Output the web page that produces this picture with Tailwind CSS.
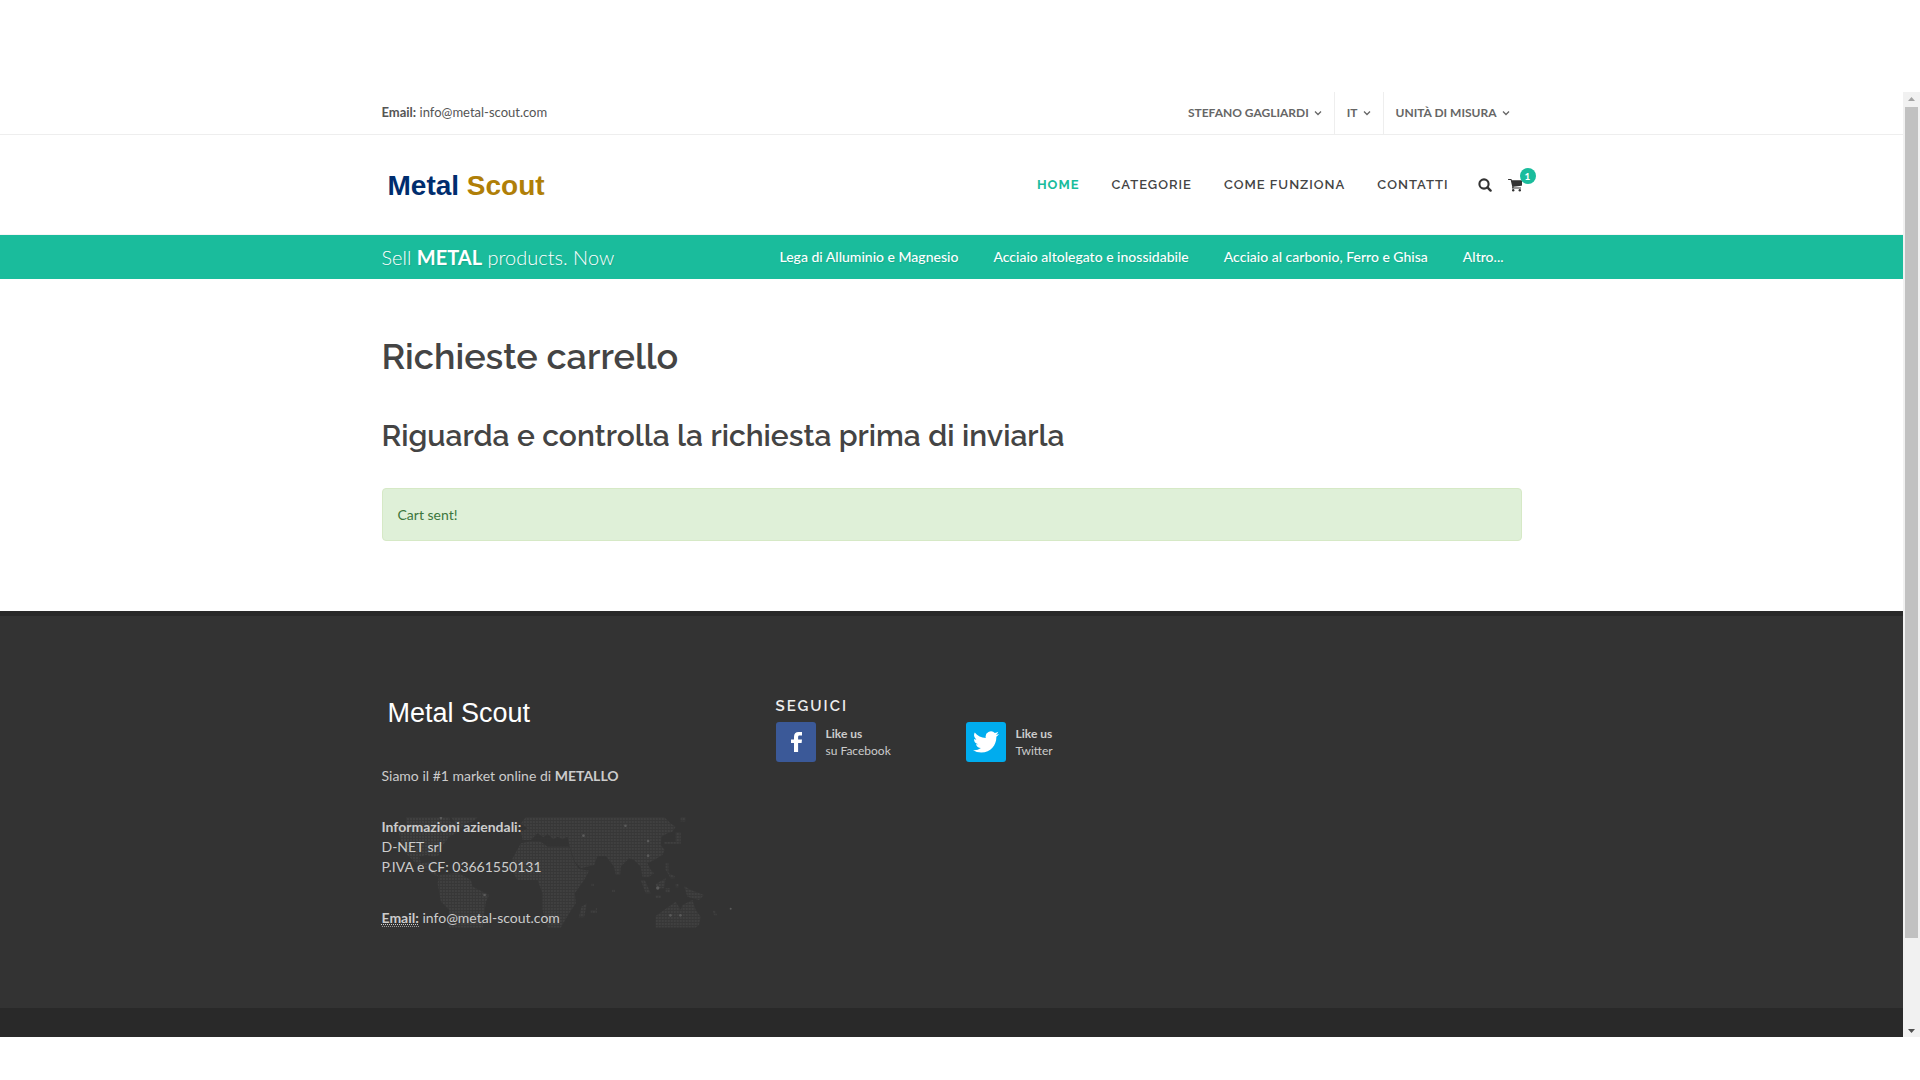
<!DOCTYPE html>
<html lang="it">
<head>
    <meta charset="UTF-8">
    <meta name="viewport" content="width=device-width, initial-scale=1.0">
    <title>Richieste carrello - Metal Scout</title>
    <script src="https://cdn.jsdelivr.net/npm/@tailwindcss/browser@4"></script>
</head>
<body class="bg-white font-[Lato,sans-serif] text-sm text-[#555555]">
<div class="mt-[92px] flex">
    <div class="min-w-0 flex-1">

        <!-- Top bar -->
        <div class="border-b border-[#eeeeee]">
            <div class="mx-auto flex h-[42px] max-w-[1140px] items-center justify-between">
                <p class="pb-0.5 text-[13px] leading-5"><strong class="font-bold">Email:</strong> info@metal-scout.com</p>
                <ul class="flex h-full text-xs font-bold text-[#666666]">
                    <li class="border-r border-[#eeeeee]">
                        <a href="#" class="flex h-full items-center gap-[5px] px-3">STEFANO GAGLIARDI
                            <svg class="h-2 w-2" viewBox="0 0 8 8" fill="none" stroke="currentColor" stroke-width="1.3"><path d="M1 2.5l3 3 3-3"/></svg>
                        </a>
                    </li>
                    <li class="border-r border-[#eeeeee]">
                        <a href="#" class="flex h-full items-center gap-[5px] px-3">IT
                            <svg class="h-2 w-2" viewBox="0 0 8 8" fill="none" stroke="currentColor" stroke-width="1.3"><path d="M1 2.5l3 3 3-3"/></svg>
                        </a>
                    </li>
                    <li>
                        <a href="#" class="flex h-full items-center gap-[5px] px-3">UNITÀ DI MISURA
                            <svg class="h-2 w-2" viewBox="0 0 8 8" fill="none" stroke="currentColor" stroke-width="1.3"><path d="M1 2.5l3 3 3-3"/></svg>
                        </a>
                    </li>
                </ul>
            </div>
        </div>

        <!-- Header -->
        <header class="border-b border-[#f5f5f5]">
            <div class="mx-auto flex h-[99px] max-w-[1140px] items-center justify-between">
                <a href="#" class="pt-0.5 pl-1.5 font-['Liberation_Sans',sans-serif] text-[28px] font-bold text-[#002d6e]">Metal <span class="text-[#b07f08]">Scout</span></a>
                <nav class="flex items-center">
                    <ul class="flex gap-8 pt-0.5 font-[Raleway,sans-serif] text-[13px] font-semibold tracking-[1px] text-[#444444]">
                        <li><a href="#" class="font-bold text-[#1abc9c]">HOME</a></li>
                        <li><a href="#">CATEGORIE</a></li>
                        <li><a href="#">COME FUNZIONA</a></li>
                        <li><a href="#">CONTATTI</a></li>
                    </ul>
                    <a href="#" aria-label="Cerca" class="ml-[29px] text-[#333333]">
                        <svg class="h-[14px] w-[14px]" viewBox="0 0 14 14" fill="none" stroke="currentColor"><circle cx="6" cy="6" r="4.6" stroke-width="2.1"/><path d="M9.4 9.4l3.2 3.2" stroke-width="2.4" stroke-linecap="round"/></svg>
                    </a>
                    <a href="#" aria-label="Carrello" class="relative ml-4 text-[#333333]">
                        <svg class="h-[14px] w-[14px]" viewBox="0 0 14 14" fill="currentColor"><path d="M.5 1h2.600c.3 0 .5.2.6.5l.1.700h9.600c.4 0 .6.2.6.5v4.600c0 .3-.2.5-.5.5l-8.100.9.2.800h7.400v1.100H4.500c-.4 0-.6-.3-.5-.6l.3-.9L2.700 2.100H.5a.5.5 0 010-1.100z"/><circle cx="5.200" cy="12.200" r="1.200"/><circle cx="11.800" cy="12.200" r="1.200"/></svg>
                        <span class="absolute -top-[10px] left-3 h-4 w-4 rounded-full bg-[#1abc9c] text-center text-[10px] leading-4 font-bold text-white">1</span>
                    </a>
                </nav>
            </div>
        </header>

        <!-- Page menu -->
        <div class="bg-[#1abc9c] text-white text-shadow-[1px_1px_1px_rgb(0_0_0/0.1)]">
            <div class="mx-auto flex h-11 max-w-[1140px] items-center justify-between">
                <p class="text-xl font-light">Sell <strong class="font-bold">METAL</strong> products. Now</p>
                <ul class="flex gap-[35px] pr-[18px] text-sm font-medium">
                    <li><a href="#">Lega di Alluminio e Magnesio</a></li>
                    <li><a href="#">Acciaio altolegato e inossidabile</a></li>
                    <li><a href="#">Acciaio al carbonio, Ferro e Ghisa</a></li>
                    <li><a href="#">Altro...</a></li>
                </ul>
            </div>
        </div>

        <!-- Content -->
        <main class="mx-auto max-w-[1140px] pt-[50px] pb-[70px]">
            <h1 class="mb-[30px] font-[Raleway,sans-serif] text-4xl leading-[54px] font-semibold text-[#444444]">Richieste carrello</h1>
            <h2 class="mb-[30px] font-[Raleway,sans-serif] text-[30px] leading-[45px] font-semibold text-[#444444]">Riguarda e controlla la richiesta prima di inviarla</h2>
            <div role="status" class="rounded border border-[#d6e9c6] bg-[#dff0d8] px-[15px] pt-4 pb-[15px] leading-5 text-[#3c763d]">Cart sent!</div>
        </main>

        <!-- Footer -->
        <footer class="border-t-[5px] border-[#292929] bg-[#333333] text-[#cccccc]">
            <div class="mx-auto grid max-w-[1140px] grid-cols-12 pt-[76px] pb-20">
                <div class="col-span-4 leading-5">
                    <p class="pl-1.5 font-['Liberation_Sans',sans-serif] text-[27px] leading-[42px] text-white">Metal Scout</p>
                    <p class="mt-8 mb-[31px]">Siamo il #1 market online di <strong>METALLO</strong></p>
                    <div class="relative">
                        <svg class="absolute top-0 left-0 h-[111px] w-[353px]" viewBox="33 411 1060 333" aria-hidden="true">
                            <defs>
                                <pattern id="dots" width="9" height="9" patternUnits="userSpaceOnUse">
                                    <rect width="9" height="9" fill="#373737"/>
                                    <rect width="6" height="6" fill="#404040"/>
                                </pattern>
                            </defs>
                            <g fill="url(#dots)">
                                <path d="M105 411H235L238 425 255 430 262 455 235 470 220 490 205 505 205 525 190 530 165 525 145 530 150 550 175 545 180 565 205 590 190 585 165 565 130 545 100 515 85 465 80 440 105 435z"/>
                                <path d="M240 411H320L310 422 285 430 270 445 250 425z"/>
                                <path d="M205 585L260 578 300 600 305 620 355 645 345 665 340 700 335 743H235V690L210 665 200 610z"/>
                                <path d="M425 535L450 490 480 484 510 485 530 500 595 500 610 545 625 567 655 572 640 600 612 640 615 670 595 700 570 743H530L515 690V640L500 600H440L425 575z"/>
                                <path d="M465 411H880L900 430 915 440 905 455 890 460 872 470 870 495 882 510 875 525 850 540 830 550 840 570 850 580 835 590H815L810 560 790 540 775 535 750 560 748 585H735L730 560 705 528H680L670 555 630 565 612 545 598 505 590 470 575 478 560 470 548 478 530 462 518 472 500 460 480 480H455L450 455 470 445 450 430z"/>
                                <path d="M632 680L648 670 640 712H624zM855 743V708L880 690 915 665 930 690 935 675 965 660 975 690 990 710 985 735 975 743z"/>
                                <path d="M810 600H822L840 640H825zM855 612L885 595 880 625H858zM940 618L960 630 1000 645 985 660 950 650zM880 486H915V457H930V491H880zM930 411H944V424H930zM885 550H893V580L912 588V595H900L885 570zM885 625H897V637H885zM915 612H923V622H915zM660 690H675V684H678V698H660zM1027 692H1034V700H1038V706H1030zM724 629H732V636H724zM662 611H669V618H662zM855 646H870V653H855z"/>
                            </g>
                            <g fill="#5a5a5a">
                                <circle cx="210" cy="414" r="4"/><circle cx="764" cy="437" r="4"/><circle cx="638" cy="467" r="4"/><circle cx="832" cy="483" r="4"/><circle cx="832" cy="527" r="4"/><circle cx="861" cy="624" r="5"/><circle cx="341" cy="645" r="4"/><circle cx="899" cy="706" r="4"/><circle cx="929" cy="706" r="4"/><circle cx="1080" cy="686" r="3"/>
                            </g>
                        </svg>
                        <address class="relative not-italic">
                            <strong>Informazioni aziendali:</strong><br>
                            D-NET srl<br>
                            P.IVA e CF: 03661550131
                        </address>
                        <p class="relative mt-[31px]"><abbr title="Email Address" class="border-b border-dotted border-[#999999] underline decoration-dotted decoration-1"><strong>Email:</strong></abbr> info@metal-scout.com</p>
                    </div>
                </div>
                <div class="col-span-8 pt-1 pl-[14px]">
                    <h4 class="mb-1.5 font-[Raleway,sans-serif] text-[15px] leading-5 font-semibold tracking-[2px] text-[#eeeeee]">SEGUICI</h4>
                    <div class="flex text-xs leading-[17px]">
                        <a href="#" class="flex w-[190px] items-center gap-[10px]">
                            <span class="flex h-10 w-10 items-center justify-center rounded-[3px] bg-[#3b5998]">
                                <svg class="h-5 w-5" viewBox="0 0 20 20" fill="#ffffff"><path d="M8 20v-9H5V7.500h3V5c0-3.300 1.500-5 4.600-5H16v3.500h-2.300c-1.300 0-1.600.5-1.600 1.600v2.400H16l-.4 3.500h-3.500v9z"/></svg>
                            </span>
                            <span><strong>Like us</strong><br>su Facebook</span>
                        </a>
                        <a href="#" class="flex items-center gap-[10px]">
                            <span class="flex h-10 w-10 items-center justify-center rounded-[3px] bg-[#00acee]">
                                <svg class="h-[26px] w-[26px]" viewBox="0 0 24 24" fill="#ffffff"><path d="M23.950 4.570a10 10 0 01-2.820.770 4.960 4.960 0 002.160-2.720c-.950.550-2 .960-3.130 1.180a4.920 4.920 0 00-8.380 4.480C7.690 8.090 4.070 6.130 1.640 3.160a4.920 4.920 0 001.520 6.570 4.900 4.900 0 01-2.230-.610v.060a4.920 4.920 0 003.950 4.830 5 5 0 01-2.210.080 4.940 4.940 0 004.600 3.420A9.870 9.870 0 010 19.540a14 14 0 007.550 2.210c9.050 0 14-7.500 14-13.980 0-.210 0-.420-.020-.630a9.940 9.940 0 002.460-2.550z"/></svg>
                            </span>
                            <span><strong>Like us</strong><br>Twitter</span>
                        </a>
                    </div>
                </div>
            </div>
            <div class="h-[29px] bg-[#292929]"></div>
        </footer>
    </div>

    <!-- Scrollbar -->
    <div class="flex w-[17px] flex-col items-center justify-between bg-[#f1f1f1]" aria-hidden="true">
        <svg class="h-[15px] w-[9px]" viewBox="0 0 9 15" fill="#a3a3a3"><path d="M1 9l3.500-4L8 9z"/></svg>
        <div class="w-[13px] flex-1 bg-[#c1c1c1]"></div>
        <div class="h-[84px]"></div>
        <svg class="h-[15px] w-[9px]" viewBox="0 0 9 15" fill="#505050"><path d="M1 7l3.500 4L8 7z"/></svg>
    </div>
</div>
</body>
</html>
